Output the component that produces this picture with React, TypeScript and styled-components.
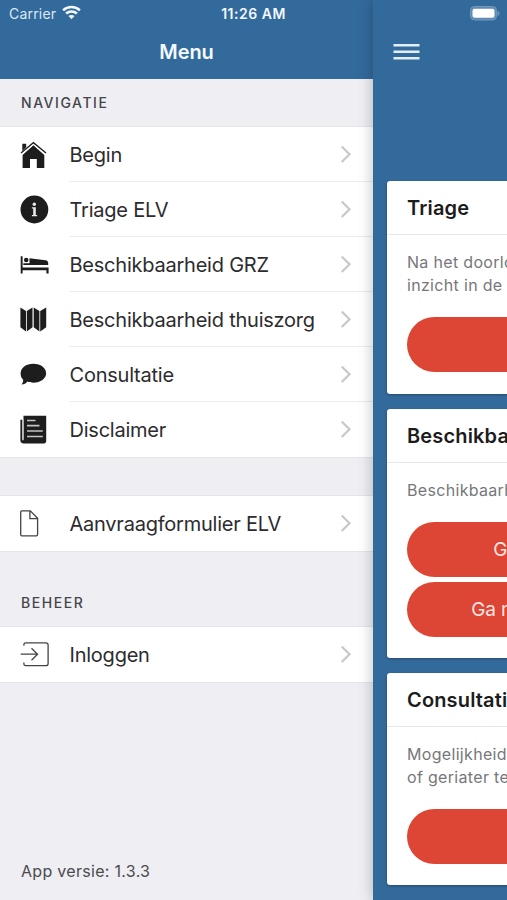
import React from "react";
import styled, { createGlobalStyle } from "styled-components";

const GlobalStyle = createGlobalStyle`
  *, *::before, *::after { box-sizing: border-box; }
  html, body { margin: 0; padding: 0; overflow: hidden; }
  body { font-family: Inter, "Liberation Sans", sans-serif; color: #222; }
`;

const Screen = styled.div`
  position: relative;
  display: flex;
  width: 507px;
  height: 900px;
  overflow: hidden;
  background: #336a9c;
`;

const StatusBar = styled.div`
  position: absolute;
  inset: 0 0 auto 0;
  z-index: 3;
  display: grid;
  grid-template-columns: 1fr auto 1fr;
  align-items: center;
  height: 27px;
  padding: 0 7px 0 9px;
  color: #dce8f5;
`;

const Carrier = styled.div`
  display: flex;
  align-items: center;
  gap: 6px;
  font-size: 14px;
  letter-spacing: 0.2px;
  svg { display: block; margin-top: -2px; }
`;

const Clock = styled.div`
  margin-left: -2px;
  font-size: 14px;
  font-weight: 600;
  letter-spacing: 0.5px;
  color: #f2f7ff;
`;

const BatteryWrap = styled.div`
  display: flex;
  justify-content: flex-end;
`;

const Menu = styled.nav`
  display: flex;
  flex-direction: column;
  flex: 0 0 373px;
  background: #efeef3;
`;

const MenuHeader = styled.header`
  display: flex;
  align-items: center;
  justify-content: center;
  height: 79px;
  padding-top: 25px;
  background: #336a9c;
  color: #f4f8ff;
  font-size: 20px;
  font-weight: 600;
  letter-spacing: -0.1px;
`;

const SectionTitle = styled.h2<{ $height: number }>`
  display: flex;
  align-items: flex-end;
  height: ${(p) => p.$height}px;
  margin: 0;
  padding: 0 0 15px 21px;
  font-size: 14px;
  line-height: 18px;
  font-weight: 500;
  letter-spacing: 1.55px;
  color: #454549;
`;

const List = styled.ul<{ $gap?: number }>`
  list-style: none;
  margin: ${(p) => p.$gap ?? 0}px 0 0;
  padding: 0;
  background: #fff;
  box-shadow: 0 0 0 1px #e5e5e9;
`;

const Item = styled.li`
  display: flex;
  height: 55px;
  padding-left: 20px;
`;

const IconCell = styled.span`
  display: flex;
  align-items: center;
  width: 49px;
  color: #1d1d1d;
  svg { display: block; }
`;

const ItemBody = styled.span<{ $line: boolean }>`
  display: flex;
  flex: 1;
  align-items: center;
  justify-content: space-between;
  padding: 0 21px 0 0.5px;
  border-bottom: 1px solid ${(p) => (p.$line ? "#ececee" : "transparent")};
`;

const Label = styled.span`
  padding-top: 1px;
  font-size: 20px;
  line-height: 26px;
  letter-spacing: -0.23px;
  white-space: nowrap;
  color: #2c2c2e;
`;

const Version = styled.footer`
  margin-top: auto;
  padding: 0 0 19px 21px;
  font-size: 16px;
  line-height: 20px;
  letter-spacing: 0.3px;
  color: #4b4b4e;
`;

const Content = styled.main`
  z-index: 2;
  flex: 0 0 507px;
  height: 900px;
  background: #336a9c;
  box-shadow: 0 0 14px rgba(0, 0, 0, 0.26);
`;

const Toolbar = styled.div`
  height: 181px;
  padding: 43px 0 0 20px;
`;

const Cards = styled.div`
  display: flex;
  flex-direction: column;
  gap: 15px;
  padding: 0 15px 0 14px;
`;

const Card = styled.section<{ $height: number }>`
  height: ${(p) => p.$height}px;
  border-radius: 3px;
  background: #fff;
  box-shadow: 0 1px 3px rgba(0, 0, 0, 0.3);
`;

const CardTitle = styled.h3`
  height: 54px;
  margin: 0;
  padding-left: 20px;
  border-bottom: 1px solid #e8e8ea;
  font-size: 20px;
  line-height: 55px;
  font-weight: 600;
  letter-spacing: 0.15px;
  color: #1c1c1c;
`;

const CardText = styled.p`
  margin: 0;
  padding: 16px 0 20px 20px;
  font-size: 16px;
  line-height: 23px;
  letter-spacing: 0.32px;
  white-space: nowrap;
  color: #77777a;
`;

const Actions = styled.div`
  display: flex;
  flex-direction: column;
  gap: 5px;
  padding: 0 20px;
`;

const ActionButton = styled.button`
  height: 55px;
  border: 0;
  border-radius: 28px;
  background: #dd4535;
  color: #fae6e3;
  font: 400 19px Inter, sans-serif;
  letter-spacing: -0.1px;
  white-space: nowrap;
`;

const Wifi = () => (
  <svg width="19" height="15" viewBox="0 0 19 15" fill="none" stroke="#f4f9ff" strokeWidth="2.5">
    <path d="M1.100 5.300C5.700.9 13.300.9 17.900 5.300" />
    <path d="M4.100 8.500c3-2.800 7.800-2.800 10.800 0" />
    <path d="M6.500 11c1.700-1.500 4.300-1.500 6 0l-3 3.200z" fill="#f4f9ff" stroke="none" />
  </svg>
);

const Battery = () => (
  <svg width="30" height="15" viewBox="0 0 30 15">
    <rect x=".5" y=".5" width="26" height="13.500" rx="4" fill="#5f8ab2" stroke="#7199bd" />
    <rect x="2.500" y="2.800" width="22" height="9" rx="2" fill="#fff" />
    <path d="M27.500 5v5c2.600-.7 2.600-4.300 0-5z" fill="#7199bd" />
  </svg>
);

const Hamburger = () => (
  <svg width="27" height="18" viewBox="0 0 27 18" stroke="#e3eefb" strokeWidth="2.400">
    <path d="M.5 2.200h26M.5 8.700h26M.5 15.200h26" />
  </svg>
);

const Chevron = () => (
  <svg width="12" height="18" viewBox="0 0 12 18" fill="none" stroke="#c9c9cc" strokeWidth="2.300">
    <path d="M1.700 1.500 9.500 9.300 1.700 17" />
  </svg>
);

const Home = () => (
  <svg width="28" height="28" viewBox="0 0 28 28" fill="currentColor">
    <path d="M2.300 2.700h3.900v3.600L2.300 9.900zM13.400 4.300 24.300 14v13H16.800v-9H10v9H2.600V14z" />
    <path d="M1 12.100 13.400 1.700 26 12.100" fill="none" stroke="currentColor" strokeWidth="1.300" />
    <path d="M2 13.200 13.400 3.600 25 13.200" fill="none" stroke="#fff" strokeWidth=".9" />
  </svg>
);

const Info = () => (
  <svg width="29" height="29" viewBox="0 0 29 29">
    <circle cx="14.400" cy="14.500" r="13.900" fill="currentColor" />
    <g fill="#e8e8e8">
      <circle cx="14.300" cy="9.300" r="1.700" />
      <path d="M11.900 12.300h3.900v7.600h1.300v1.300h-5.200v-1.300h1.300v-6.300h-1.300z" />
    </g>
  </svg>
);

const Bed = () => (
  <svg width="29" height="20" viewBox="0 0 29 20" fill="currentColor">
    <path d="M.7 1.300h1.900v11.200h26v5.900h-2.200v-3.200H2.600v3.200H.7z" />
    <circle cx="6.200" cy="5" r="2.300" />
    <path d="m9.500 3.300 16 1.900c1.800.3 2.700 1.300 2.700 3v1.800H9.500zM3.300 8.300h7V10h-7z" />
    <path d="M3 11.200h25.500" stroke="#fff" strokeWidth="1" />
  </svg>
);

const MapIcon = () => (
  <svg width="27" height="27" viewBox="0 0 27 27" fill="currentColor">
    <path d="M.4 1.400 6 5.100v20.500L.4 21.300zM6.800 5.100 12.500 1.400v19.900l-5.700 4.300zM13.700 1.400 19.400 5.100v20.500l-5.700-4.300zM20.200 5.100l6-3.700v19.900l-6 4.300z" />
  </svg>
);

const Chat = () => (
  <svg width="27" height="23" viewBox="0 0 27 23" fill="currentColor">
    <path d="M13.400.8c7.300 0 12.700 4.200 12.700 9.500s-5.400 9.400-12.700 9.400c-2.200 0-4.300-.4-6-1.200-1.300 1.800-3.200 3-6 3.100 1.200-1.200 1.900-2.900 1.800-4.800C1.500 15.100.6 12.900.6 10.500.6 5 6 .8 13.400.8z" />
  </svg>
);

const Paper = () => (
  <svg width="27" height="29" viewBox="0 0 27 29" fill="currentColor">
    <path d="M3.500.7h22.700v25.200c0 1.600-.9 2.500-2.400 2.500H3.200C1.500 28.400.4 27.300.4 25.600V4.700h2v20.600h1.100z" />
    <path d="M7 5.500h8.500M7 10.700h12.500M7 16h15.800M7 21.500h15.800" stroke="#c4c4c4" strokeWidth="1.700" />
    <path d="M3 4.500v20" stroke="#ddd" strokeWidth=".9" />
  </svg>
);

const DocumentIcon = () => (
  <svg width="19" height="27" viewBox="0 0 19 27" fill="none" stroke="#444" strokeWidth="1.300">
    <path d="M1.800.8h8.500l7.300 7.500v16.200c0 .8-.5 1.300-1.300 1.300H1.800C1 25.800.7 25.300.7 24.500V2C.7 1.200 1 .8 1.800.8zM9.900 1v7.600h7.600" />
  </svg>
);

const Login = () => (
  <svg width="29" height="25" viewBox="0 0 29 25" fill="none" stroke="#444" strokeWidth="1.300">
    <path d="M3.900 3.700V2.400C3.900 1.300 4.600.8 5.600.8H25.900c1.400 0 2.200.8 2.200 2.200v18.400c0 1.400-.8 2.200-2.200 2.200H5.600c-1 0-1.700-.6-1.700-1.600v-1.400M.7 12.200h16.500M11.500 6.300l6 5.900-6 6" />
  </svg>
);

type Entry = { label: string; icon: React.ReactNode };

const navigation: Entry[] = [
  { label: "Begin", icon: <Home /> },
  { label: "Triage ELV", icon: <Info /> },
  { label: "Beschikbaarheid GRZ", icon: <Bed /> },
  { label: "Beschikbaarheid thuiszorg", icon: <MapIcon /> },
  { label: "Consultatie", icon: <Chat /> },
  { label: "Disclaimer", icon: <Paper /> },
];
const forms: Entry[] = [{ label: "Aanvraagformulier ELV", icon: <DocumentIcon /> }];
const admin: Entry[] = [{ label: "Inloggen", icon: <Login /> }];

const MenuList = ({ entries, gap }: { entries: Entry[]; gap?: number }) => (
  <List $gap={gap}>
    {entries.map((entry, i) => (
      <Item key={entry.label}>
        <IconCell>{entry.icon}</IconCell>
        <ItemBody $line={i < entries.length - 1}>
          <Label>{entry.label}</Label>
          <Chevron />
        </ItemBody>
      </Item>
    ))}
  </List>
);

export default function App() {
  return (
    <>
      <GlobalStyle />
      <Screen>
        <StatusBar>
          <Carrier>Carrier <Wifi /></Carrier>
          <Clock>11:26 AM</Clock>
          <BatteryWrap><Battery /></BatteryWrap>
        </StatusBar>
        <Menu>
          <MenuHeader>Menu</MenuHeader>
          <SectionTitle $height={48}>NAVIGATIE</SectionTitle>
          <MenuList entries={navigation} />
          <MenuList entries={forms} gap={39} />
          <SectionTitle $height={76}>BEHEER</SectionTitle>
          <MenuList entries={admin} />
          <Version>App versie: 1.3.3</Version>
        </Menu>
        <Content>
          <Toolbar><Hamburger /></Toolbar>
          <Cards>
            <Card $height={213}>
              <CardTitle>Triage</CardTitle>
              <CardText>Na het doorlopen<br />inzicht in de</CardText>
              <Actions><ActionButton /></Actions>
            </Card>
            <Card $height={249}>
              <CardTitle>Beschikbaarheid</CardTitle>
              <CardText>Beschikbaarheid</CardText>
              <Actions>
                <ActionButton>Ga naar beschikbaarheid GRZ</ActionButton>
                <ActionButton>Ga naar beschikbaarheid thuiszorg</ActionButton>
              </Actions>
            </Card>
            <Card $height={212}>
              <CardTitle>Consultatie</CardTitle>
              <CardText>Mogelijkheid<br />of geriater te</CardText>
              <Actions><ActionButton /></Actions>
            </Card>
          </Cards>
        </Content>
      </Screen>
    </>
  );
}
